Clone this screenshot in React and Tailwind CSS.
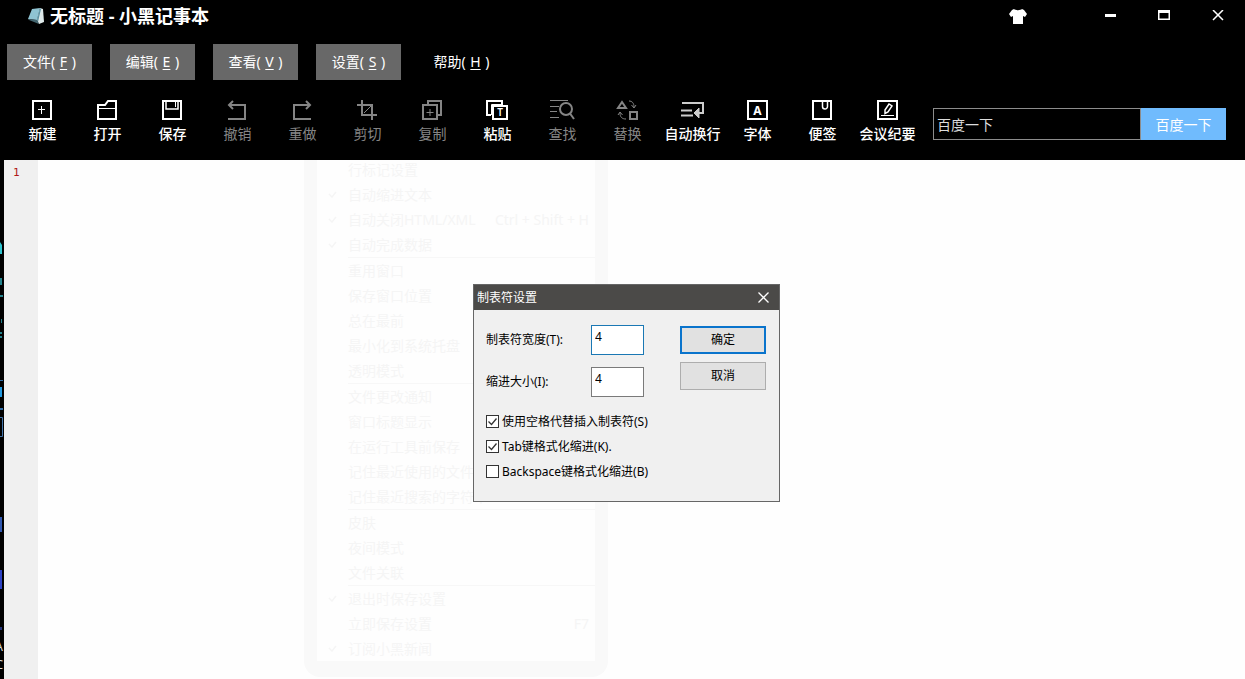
import { useState } from "react";

const MENUS = [
  { label: "文件", hotkey: "F", filled: true },
  { label: "编辑", hotkey: "E", filled: true },
  { label: "查看", hotkey: "V", filled: true },
  { label: "设置", hotkey: "S", filled: true },
  { label: "帮助", hotkey: "H", filled: false },
];

const ICONS = {
  new: (
    <>
      <rect x="1" y="1" width="18" height="18" strokeWidth="2" />
      <path d="M9.5 6v8M6 9.5h7" />
    </>
  ),
  open: (
    <>
      <path d="M1 5h7l3-4h8v18H1z" strokeWidth="2" />
      <path d="M2 8.5h16" />
    </>
  ),
  save: (
    <>
      <rect x="1" y="1" width="18" height="18" strokeWidth="2" />
      <path d="M4 2v7h12V2" strokeWidth="1.5" />
      <path d="M13.5 2v5" />
    </>
  ),
  undo: (
    <>
      <path d="M2 5h16v14H1" strokeWidth="2" />
      <path d="M6 1L2 5l4 4" strokeWidth="2" />
    </>
  ),
  redo: (
    <>
      <path d="M18 5H2v14h17" strokeWidth="2" />
      <path d="M14 1l4 4-4 4" strokeWidth="2" />
    </>
  ),
  cut: (
    <>
      <path d="M5 0v15h15M0 5h15v15" strokeWidth="2" />
      <path d="M7 13l7-7" />
    </>
  ),
  copy: (
    <>
      <path d="M6 4V1h13v14h-3" strokeWidth="2" />
      <rect x="1" y="5" width="14" height="14" strokeWidth="2" />
      <path d="M8 9v7M4.500 12.500h7" />
    </>
  ),
  paste: (
    <>
      <path d="M4 15H0V1h15v3" strokeWidth="2" />
      <rect x="6" y="6" width="14" height="13" strokeWidth="2" />
      <path d="M4.500 15V4.500H16" />
      <text x="13" y="16" textAnchor="middle" fontSize="10" fontWeight="600" fill="currentColor" stroke="none">
        T
      </text>
    </>
  ),
  find: (
    <>
      <path d="M-2 .5h18M-2 6.500h9M-2 11.500h7M-2 17.500h9" />
      <circle cx="14" cy="9" r="6" strokeWidth="2" />
      <path d="M18 13.500l4 5.500" strokeWidth="2" />
    </>
  ),
  replace: (
    <>
      <path d="M5 2L1 8h8z" strokeWidth="2" />
      <rect x="13" y="12" width="7" height="7" strokeWidth="2" />
      <path d="M12 1c3 0 5 2 5 6M14.500 5L17 8l2-3" />
      <path d="M9 19c-4 0-6-2-6-6M1 15l2-3 2.500 3" />
    </>
  ),
  wrap: (
    <>
      <path d="M0 3h21v10h-7" strokeWidth="2" />
      <path d="M-1 10.500h11M-1 15.500h12" strokeWidth="2" />
      <path d="M17 8l-5 5 5 5z" fill="currentColor" />
    </>
  ),
  font: (
    <>
      <rect x="1" y="1" width="19" height="18" strokeWidth="2" />
      <text x="10.500" y="14.500" textAnchor="middle" fontSize="12" fontWeight="700" fill="currentColor" stroke="none">
        A
      </text>
    </>
  ),
  memo: (
    <>
      <rect x="1" y="1" width="18" height="18" strokeWidth="2" />
      <path d="M10.500 2v4.500a2.500 2.500 0 0 0 5 0V2" strokeWidth="1.5" />
    </>
  ),
  meeting: (
    <>
      <rect x="1" y="1" width="19" height="18" strokeWidth="2" />
      <path d="M4 15.500h13" />
      <path d="M8 10l4-6 3 2-4 6-3 1.500z" strokeWidth="1.5" />
    </>
  ),
};

const TOOLS = [
  { icon: "new", label: "新建" },
  { icon: "open", label: "打开" },
  { icon: "save", label: "保存" },
  { icon: "undo", label: "撤销", disabled: true },
  { icon: "redo", label: "重做", disabled: true },
  { icon: "cut", label: "剪切", disabled: true },
  { icon: "copy", label: "复制", disabled: true },
  { icon: "paste", label: "粘贴" },
  { icon: "find", label: "查找", disabled: true },
  { icon: "replace", label: "替换", disabled: true },
  { icon: "wrap", label: "自动换行" },
  { icon: "font", label: "字体" },
  { icon: "memo", label: "便签" },
  { icon: "meeting", label: "会议纪要" },
];

// Settings menu, still fading out behind the dialog
const FADING_MENU = [
  [
    { label: "行标记设置" },
    { label: "自动缩进文本", checked: true },
    { label: "自动关闭HTML/XML", keys: "Ctrl + Shift + H", checked: true },
    { label: "自动完成数据", checked: true },
  ],
  [
    { label: "重用窗口" },
    { label: "保存窗口位置" },
    { label: "总在最前" },
    { label: "最小化到系统托盘" },
    { label: "透明模式" },
  ],
  [
    { label: "文件更改通知" },
    { label: "窗口标题显示" },
    { label: "在运行工具前保存" },
    { label: "记住最近使用的文件" },
    { label: "记住最近搜索的字符串" },
  ],
  [{ label: "皮肤" }, { label: "夜间模式" }, { label: "文件关联" }],
  [
    { label: "退出时保存设置", checked: true },
    { label: "立即保存设置", keys: "F7" },
    { label: "订阅小黑新闻", checked: true },
  ],
];

function TitleBar() {
  return (
    <header className="flex h-8 items-center">
      <svg className="ml-7 h-4 w-4" viewBox="0 0 16 16">
        <path d="M0 11L4 1l8-1-3 12z" fill="#8fc3d2" />
        <path d="M12 0l3 1 1 13-5 2-2-4z" fill="#dfeaea" />
        <path d="M12 0l1 1-3 13-1-2z" fill="#5b93a5" />
        <path d="M0 11l9 1 2 4-10-4z" fill="#43656f" />
      </svg>
      <h1 className="ml-[6px] flex-1 text-[18px] leading-8 font-bold">无标题 - 小黑记事本</h1>
      <button aria-label="皮肤" className="mr-[38px] flex h-8 w-[54px] items-center justify-center">
        <svg width="18" height="15" viewBox="0 0 18 15" fill="#fff">
          <path d="M5 0c1 1.500 7 1.500 8 0l2 1 3 4-2 3-2-1v8H4V7L2 8 0 5l3-4z" />
        </svg>
      </button>
      <button aria-label="最小化" className="flex h-8 w-[54px] items-center justify-center">
        <svg width="12" height="12" viewBox="0 0 12 12" fill="#fff">
          <path d="M1 4h11v3H1z" />
        </svg>
      </button>
      <button aria-label="最大化" className="flex h-8 w-[54px] items-center justify-center">
        <svg width="12" height="12" viewBox="0 0 12 12" fill="none" stroke="#fff">
          <path d="M0 1.500h12" strokeWidth="3" />
          <path d="M.75 2v7.250h10.500V2" strokeWidth="1.5" />
        </svg>
      </button>
      <button aria-label="关闭" className="flex h-8 w-[54px] items-center justify-center">
        <svg width="12" height="12" viewBox="0 0 12 12" stroke="#fff" strokeWidth="1.5">
          <path d="M1 0l10 10M11 0L1 10" />
        </svg>
      </button>
    </header>
  );
}

function MenuBar() {
  return (
    <nav className="mt-3 flex gap-[18px] pl-[7px]">
      {MENUS.map((menu) => (
        <button
          key={menu.hotkey}
          className={`h-9 w-[85px] text-[14px] leading-5 whitespace-nowrap ${menu.filled ? "bg-[#686868]" : ""}`}
        >
          {menu.label}( <u className="mx-px underline-offset-2">{menu.hotkey}</u> )
        </button>
      ))}
    </nav>
  );
}

function ToolBar() {
  const [query, setQuery] = useState("百度一下");

  return (
    <div className="flex h-20 pl-[10px]">
      {TOOLS.map((tool) => (
        <button
          key={tool.icon}
          disabled={tool.disabled}
          className={`flex w-[65px] shrink-0 flex-col items-center pt-5 ${
            tool.disabled ? "text-[#858585]" : "font-medium text-white"
          }`}
        >
          <svg
            className={`overflow-visible ${tool.icon === "wrap" ? "text-[#cccccc]" : ""}`}
            width="21"
            height="20"
            viewBox="0 0 21 20"
            fill="none"
            stroke="currentColor"
          >
            {ICONS[tool.icon]}
          </svg>
          <span className="mt-1 text-[14px] leading-5 whitespace-nowrap">{tool.label}</span>
        </button>
      ))}
      <form className="mt-7 mr-[19px] ml-[13px] flex h-8 min-w-0 flex-1" onSubmit={(e) => e.preventDefault()}>
        <input
          aria-label="搜索"
          value={query}
          onChange={(e) => setQuery(e.target.value)}
          className="min-w-0 flex-1 border border-[#8c8c8c] bg-black px-[3px] text-[14px] text-[#dddddd] outline-none"
        />
        <button className="w-[85px] shrink-0 bg-[#70bbfd] text-[14px] text-white">百度一下</button>
      </form>
    </div>
  );
}

// Sliver of the desktop visible left of the window, icon captions cut by the window edge
function DesktopEdge() {
  return (
    <div className="relative w-1 shrink-0 overflow-hidden bg-black">
      <svg width="3" height="480" viewBox="0 0 3 480">
        <path d="M0 82l2 3v9H0z" fill="#2ec4cf" />
        <path d="M0 118h2v7H0zM0 135h3v2H0zM1 159h1v4H1zM0 172h2v2H0zM0 176h2v2H0z" fill="#23828c" />
        <path d="M0 220h3v1H0zM0 248h3v2H0z" fill="#2f6da8" />
        <path d="M0 227h2v10H0z" fill="#2299e0" />
        <path d="M0 257.500h2.500v19H0" fill="none" stroke="#4273a8" />
        <path d="M0 357h2v15H0z" fill="#3158b0" />
        <path d="M0 410h2v19H0z" fill="#2e42c4" />
        <path d="M0 467h2v3H0z" fill="#26357a" />
      </svg>
      <div className="absolute top-[478px] left-0 flex w-[3px] flex-col items-end text-[12px] leading-[18px] text-[#dddddd]">
        <span>A</span>
        <span>C</span>
      </div>
    </div>
  );
}

function FadingMenu() {
  return (
    <div className="absolute -top-[3px] left-[300px] w-[304px] rounded-b-2xl border-x-[13px] border-b-[16px] border-[#f9f9f9] text-[14px] text-[#f5f5f5]">
      {FADING_MENU.map((group, i) => (
        <div key={i}>
          {i > 0 && <hr className="ml-[31px] border-[#f7f7f7]" />}
          <ul>
            {group.map((item) => (
              <li key={item.label} className="flex h-[25px] items-center pr-[6px] whitespace-nowrap">
                <span className="w-[31px] shrink-0 pl-[11px]">
                  {item.checked && (
                    <svg width="9" height="8" viewBox="0 0 9 8" fill="none" stroke="currentColor" strokeWidth="1.5">
                      <path d="M1 3l3 3 4-5" />
                    </svg>
                  )}
                </span>
                <span className="flex-1">{item.label}</span>
                <span>{item.keys}</span>
              </li>
            ))}
          </ul>
        </div>
      ))}
    </div>
  );
}

function CheckRow({ label, defaultChecked }) {
  return (
    <label className="flex h-[25px] items-center gap-[3px]">
      <span className="relative h-[13px] w-[13px]">
        <input
          type="checkbox"
          defaultChecked={defaultChecked}
          className="peer block h-[13px] w-[13px] appearance-none border border-[#333333] bg-white"
        />
        <svg
          className="pointer-events-none absolute inset-0 hidden peer-checked:block"
          width="13"
          height="13"
          viewBox="0 0 13 13"
          fill="none"
          stroke="#333333"
        >
          <path d="M2.500 6.500l3 3 5-6" strokeWidth="1.3" />
        </svg>
      </span>
      {label}
    </label>
  );
}

function TabDialog() {
  return (
    <div
      role="dialog"
      aria-label="制表符设置"
      className="absolute top-[284px] left-[473px] w-[307px] border border-[#666666] bg-[#f0f0f0] text-[12px] leading-4 text-black"
    >
      <div className="flex h-[25px] items-center justify-between bg-[#4b4a48] pl-[3px] text-white">
        <h2>制表符设置</h2>
        <button aria-label="关闭" className="flex h-[25px] w-[31px] items-center justify-center">
          <svg width="11" height="11" viewBox="0 0 11 11" stroke="#fff" strokeWidth="1.3">
            <path d="M.5.5l10 10M10.500.5l-10 10" />
          </svg>
        </button>
      </div>
      <div className="px-3 pt-[15px] pb-[17px]">
        <div className="flex justify-between">
          <div className="grid grid-cols-[105px_53px] items-center gap-y-3">
            <label htmlFor="tab-width">制表符宽度(T):</label>
            <input
              id="tab-width"
              defaultValue="4"
              className="h-[30px] border border-[#1a78b4] bg-white px-[3px] pb-2 outline-none"
            />
            <label htmlFor="indent-size">缩进大小(I):</label>
            <input
              id="indent-size"
              defaultValue="4"
              className="h-[30px] border border-[#7a7a7a] bg-white px-[3px] pb-2 outline-none"
            />
          </div>
          <div className="mt-px mr-px flex flex-col gap-2">
            <button className="h-7 w-[86px] border-2 border-[#0a74cc] bg-[#e1e1e1]">确定</button>
            <button className="h-7 w-[86px] border border-[#adadad] bg-[#e1e1e1]">取消</button>
          </div>
        </div>
        <div className="mt-3">
          <CheckRow label="使用空格代替插入制表符(S)" defaultChecked />
          <CheckRow label="Tab键格式化缩进(K)." defaultChecked />
          <CheckRow label="Backspace键格式化缩进(B)" />
        </div>
      </div>
    </div>
  );
}

export default function App() {
  return (
    <div className="relative flex min-h-screen flex-col bg-black font-['Noto_Sans','Noto_Sans_CJK_SC',sans-serif] text-white">
      <TitleBar />
      <MenuBar />
      <ToolBar />
      <main className="flex flex-1">
        <DesktopEdge />
        <div className="relative flex flex-1 overflow-hidden bg-[#fefefe]">
          <div className="w-[34px] shrink-0 bg-[#f0f0f0] pt-[5px] pl-[9px] font-['DejaVu_Sans_Mono',monospace] text-[11px] leading-4 text-[#b01818]">
            1
          </div>
          <FadingMenu />
          <textarea aria-label="正文" className="relative flex-1 resize-none bg-transparent text-black outline-none" />
        </div>
      </main>
      <TabDialog />
    </div>
  );
}
